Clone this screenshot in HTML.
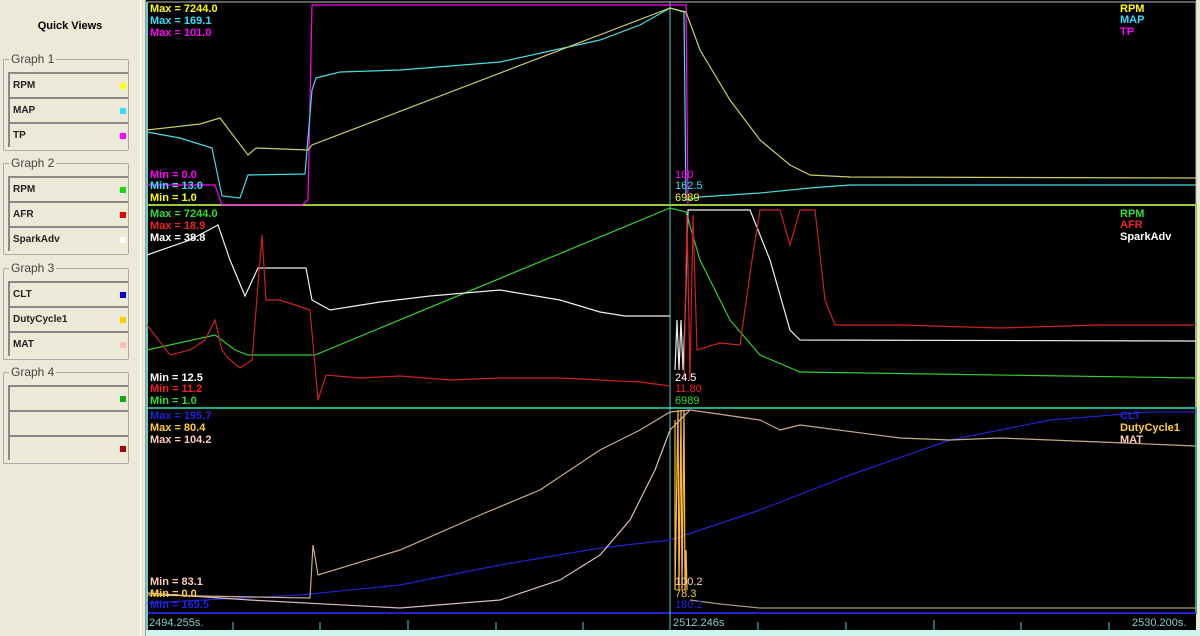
<!DOCTYPE html>
<html><head><meta charset="utf-8"><style>
*{margin:0;padding:0;box-sizing:border-box}
body{width:1200px;height:636px;background:#ece9d8;font-family:"Liberation Sans",sans-serif;position:relative;overflow:hidden}
.qv{position:absolute;left:0;top:20px;width:140px;text-align:center;font-weight:bold;font-size:11px;color:#000}
.grp{position:absolute;left:3px;width:126px;border:1px solid #aaa;border-radius:2px}
.grp .t{position:absolute;top:-8px;left:5px;background:#ece9d8;font-size:12px;color:#444;padding:0 2px}
.it{position:absolute;left:4px;width:120px;height:25px;border-top:2px solid #888;border-left:2px solid #888;font-size:10px;font-weight:bold;color:#222;padding:6px 0 0 3px}
.it i{position:absolute;right:2px;top:9px;width:6px;height:6px}
.div{position:absolute;left:140px;top:0;width:6px;height:636px;background:#ece9d8;border-left:1px solid #fff;border-right:1px solid #999}
svg{position:absolute;left:146px;top:0}
svg text{font-family:"Liberation Sans",sans-serif;font-size:11px}
.b{font-weight:bold}
</style></head><body>
<div class="qv">Quick Views</div>
<div class="grp" style="top:59px;height:92px"><span class="t">Graph 1</span>
<div class="it" style="top:12px">RPM<i style="background:#ff0"></i></div>
<div class="it" style="top:37px">MAP<i style="background:#3df"></i></div>
<div class="it" style="top:62px">TP<i style="background:#f0f"></i></div></div>
<div class="grp" style="top:163px;height:92px"><span class="t">Graph 2</span>
<div class="it" style="top:12px">RPM<i style="background:#1d1"></i></div>
<div class="it" style="top:37px">AFR<i style="background:#e00"></i></div>
<div class="it" style="top:62px">SparkAdv<i style="background:#fff"></i></div></div>
<div class="grp" style="top:268px;height:92px"><span class="t">Graph 3</span>
<div class="it" style="top:12px">CLT<i style="background:#00d"></i></div>
<div class="it" style="top:37px">DutyCycle1<i style="background:#fc0"></i></div>
<div class="it" style="top:62px">MAT<i style="background:#fbb"></i></div></div>
<div class="grp" style="top:372px;height:92px"><span class="t">Graph 4</span>
<div class="it" style="top:12px"><i style="background:#1a1"></i></div>
<div class="it" style="top:37px"></div>
<div class="it" style="top:62px"><i style="background:#a00"></i></div></div>
<div class="div"></div>
<svg width="1054" height="636" viewBox="146 0 1054 636">
<rect x="146" y="0" width="1054" height="636" fill="#000"/>
<rect x="1196" y="0" width="4" height="636" fill="#ece9d8"/>
<rect x="146" y="630" width="1054" height="6" fill="#ccf5ee"/>
<rect x="147" y="2" width="1049" height="203" fill="none" stroke="#bbb" stroke-width="1"/>
<rect x="147" y="205" width="1049" height="203" fill="none" stroke="#9c3" stroke-width="2"/>
<rect x="147" y="408" width="1049" height="205" fill="none" stroke="#2a8" stroke-width="2"/>
<line x1="147" y1="613" x2="1196" y2="613" stroke="#22c" stroke-width="2"/>
<line x1="147" y1="2" x2="147" y2="630" stroke="#6cc" stroke-width="2"/>
<line x1="670" y1="2" x2="670" y2="630" stroke="#5cc"/>
<g stroke="#5cc"><line x1="233" y1="622" x2="233" y2="630"/><line x1="320" y1="622" x2="320" y2="630"/><line x1="408" y1="620" x2="408" y2="630"/><line x1="496" y1="622" x2="496" y2="630"/><line x1="583" y1="622" x2="583" y2="630"/><line x1="758" y1="622" x2="758" y2="630"/><line x1="846" y1="622" x2="846" y2="630"/><line x1="934" y1="620" x2="934" y2="630"/><line x1="1021" y1="622" x2="1021" y2="630"/><line x1="1109" y1="622" x2="1109" y2="630"/></g>
<g fill="none" stroke-width="1.2">
<polyline stroke="#f0f" points="147,185 215,185 222,205 302,205 308,200 312,5 686,5 688,205"/>
<polyline stroke="#4dd" points="147,132 180,138 212,148 222,196 240,198 248,175 305,174 312,90 316,78 340,72 400,70 500,62 600,40 640,25 670,8 684,12 686,200 700,197 760,193 810,188 850,185 1196,185"/>
<polyline stroke="#cc6" points="147,130 200,124 220,118 248,155 256,148 308,150 312,145 670,8 686,12 700,50 730,100 760,140 790,165 810,175 850,177 1196,178"/>
<polyline stroke="#3c3" points="147,350 215,335 235,350 248,355 315,355 670,208 686,212 700,260 730,320 760,355 800,372 1196,378"/>
<polyline stroke="#eee" points="147,255 190,240 218,225 230,260 245,296 258,268 306,268 312,300 330,310 380,302 430,296 500,290 560,300 600,312 625,316 670,316"/>
<polyline stroke="#eee" points="675,370 677,320 679,370 681,320 683,370 685,320 688,210 750,210 770,260 790,330 800,340 1196,341"/>
<polyline stroke="#c22" points="147,325 170,355 190,350 205,340 215,320 222,350 228,358 240,368 252,360 262,235 266,300 280,300 310,310 318,400 326,375 360,378 400,376 450,380 500,378 560,378 600,380 640,382 670,386"/>
<polyline stroke="#c22" points="684,380 687,215 690,380 693,215 697,350 720,343 740,345 752,260 760,210 780,210 790,245 800,210 815,210 825,300 835,325 900,325 1000,328 1100,325 1196,325"/>
<polyline stroke="#22c" points="147,603 300,595 400,585 500,565 600,548 670,540 760,510 850,475 950,440 1050,420 1150,412 1196,412"/>
<polyline stroke="#ca8" points="147,595 310,598 313,545 318,575 400,550 480,515 540,490 600,450 640,430 670,412 690,410 760,420 780,430 800,425 900,438 950,440 1000,438 1100,442 1196,446"/>
<polyline stroke="#dbb" points="147,593 250,600 400,608 500,600 560,580 600,555 630,520 655,470 670,430 690,410"/>
<polyline stroke="#fb3" points="675,420 675,590 678,410 679,590 681,410 682,590 684,410 685,590 686,550 687,590"/>
<polyline stroke="#a97" points="690,600 720,604 760,608 1196,608"/>
</g>
<g class="b">
<text x="150" y="12" fill="#ff0">Max = 7244.0</text><text x="150" y="24" fill="#3df">Max = 169.1</text><text x="150" y="36" fill="#f0f">Max = 101.0</text>
<text x="150" y="178" fill="#f0f">Min = 0.0</text><text x="150" y="189" fill="#3df">Min = 13.0</text><text x="150" y="201" fill="#ff0">Min = 1.0</text>
<text x="1120" y="12" fill="#ff0">RPM</text><text x="1120" y="23" fill="#3df">MAP</text><text x="1120" y="35" fill="#f0f">TP</text>
<text x="150" y="217" fill="#3d3">Max = 7244.0</text><text x="150" y="229" fill="#e22">Max = 18.9</text><text x="150" y="241" fill="#fff">Max = 38.8</text>
<text x="150" y="381" fill="#fff">Min = 12.5</text><text x="150" y="392" fill="#e22">Min = 11.2</text><text x="150" y="404" fill="#3d3">Min = 1.0</text>
<text x="1120" y="217" fill="#3d3">RPM</text><text x="1120" y="228" fill="#e22">AFR</text><text x="1120" y="240" fill="#fff">SparkAdv</text>
<text x="150" y="419" fill="#22d">Max = 195.7</text><text x="150" y="431" fill="#fc3">Max = 80.4</text><text x="150" y="443" fill="#fcb">Max = 104.2</text>
<text x="150" y="585" fill="#fcb">Min = 83.1</text><text x="150" y="597" fill="#fc3">Min = 0.0</text><text x="150" y="608" fill="#22d">Min = 169.5</text>
<text x="1120" y="419" fill="#22d">CLT</text><text x="1120" y="431" fill="#fc3">DutyCycle1</text><text x="1120" y="443" fill="#fcb">MAT</text>
</g>
<text x="675" y="178" fill="#f0f">100</text><text x="675" y="189" fill="#3df">162.5</text><text x="675" y="201" fill="#ff0">6989</text>
<text x="675" y="381" fill="#fff">24.5</text><text x="675" y="392" fill="#e22">11.80</text><text x="675" y="404" fill="#3d3">6989</text>
<text x="675" y="585" fill="#fcb">100.2</text><text x="675" y="597" fill="#fc3">78.3</text><text x="675" y="608" fill="#22d">180.2</text>
<text x="149" y="626" fill="#8cc">2494.255s.</text><text x="673" y="626" fill="#8cc">2512.246s</text><text x="1132" y="626" fill="#8cc">2530.200s.</text>
</svg>
</body></html>
